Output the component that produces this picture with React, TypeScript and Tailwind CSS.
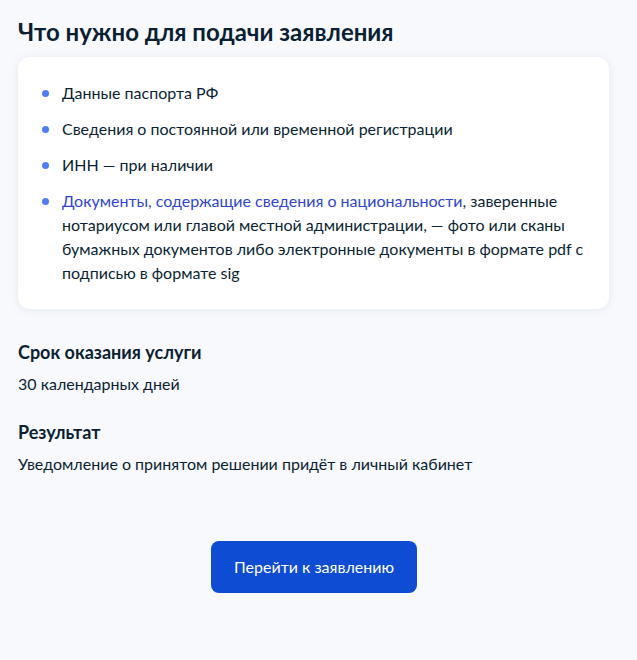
const ITEMS: { link?: string; text: string }[] = [
  { text: "Данные паспорта РФ" },
  { text: "Сведения о постоянной или временной регистрации" },
  { text: "ИНН — при наличии" },
  {
    link: "Документы, содержащие сведения о национальности",
    text: ", заверенные нотариусом или главой местной администрации, — фото или сканы бумажных документов либо электронные документы в формате pdf с подписью в формате sig",
  },
];

export default function App() {
  return (
    <div className="min-h-[660px] bg-[#f8f9fd] pl-[18px] pr-[28px] pt-[18px] text-[#0b1f33] font-['Lato','Noto_Sans',sans-serif]">
      <h2 className="text-[24px] leading-[28px] font-bold">Что нужно для подачи заявления</h2>

      <div className="mt-[11px] rounded-[12px] bg-white px-6 py-6 shadow-[0_1px_8px_rgba(86,110,160,0.12)]">
        <ul className="flex flex-col gap-3">
          {ITEMS.map((item, i) => (
            <li key={i} className="flex items-start gap-[13px] text-[16px] leading-[24px]">
              <span className="mt-[9px] h-[7px] w-[7px] shrink-0 rounded-full bg-[#4f7ef2]"></span>
              <span>
                {item.link && <span className="text-[#3046d2]">{item.link}</span>}
                {item.text}
              </span>
            </li>
          ))}
        </ul>
      </div>

      <div className="mt-[31px]">
        <h3 className="text-[18px] leading-[24px] font-bold">Срок оказания услуги</h3>
        <p className="mt-2 text-[16px] leading-[24px]">30 календарных дней</p>
      </div>

      <div className="mt-6">
        <h3 className="text-[18px] leading-[24px] font-bold">Результат</h3>
        <p className="mt-2 text-[16px] leading-[24px]">Уведомление о принятом решении придёт в личный кабинет</p>
      </div>

      <div className="mt-[65px] flex justify-center pl-[1px]">
        <button className="h-[52px] w-[206px] rounded-[8px] bg-[#0d4cd3] text-[16px] text-white">
          Перейти к заявлению
        </button>
      </div>
    </div>
  );
}
